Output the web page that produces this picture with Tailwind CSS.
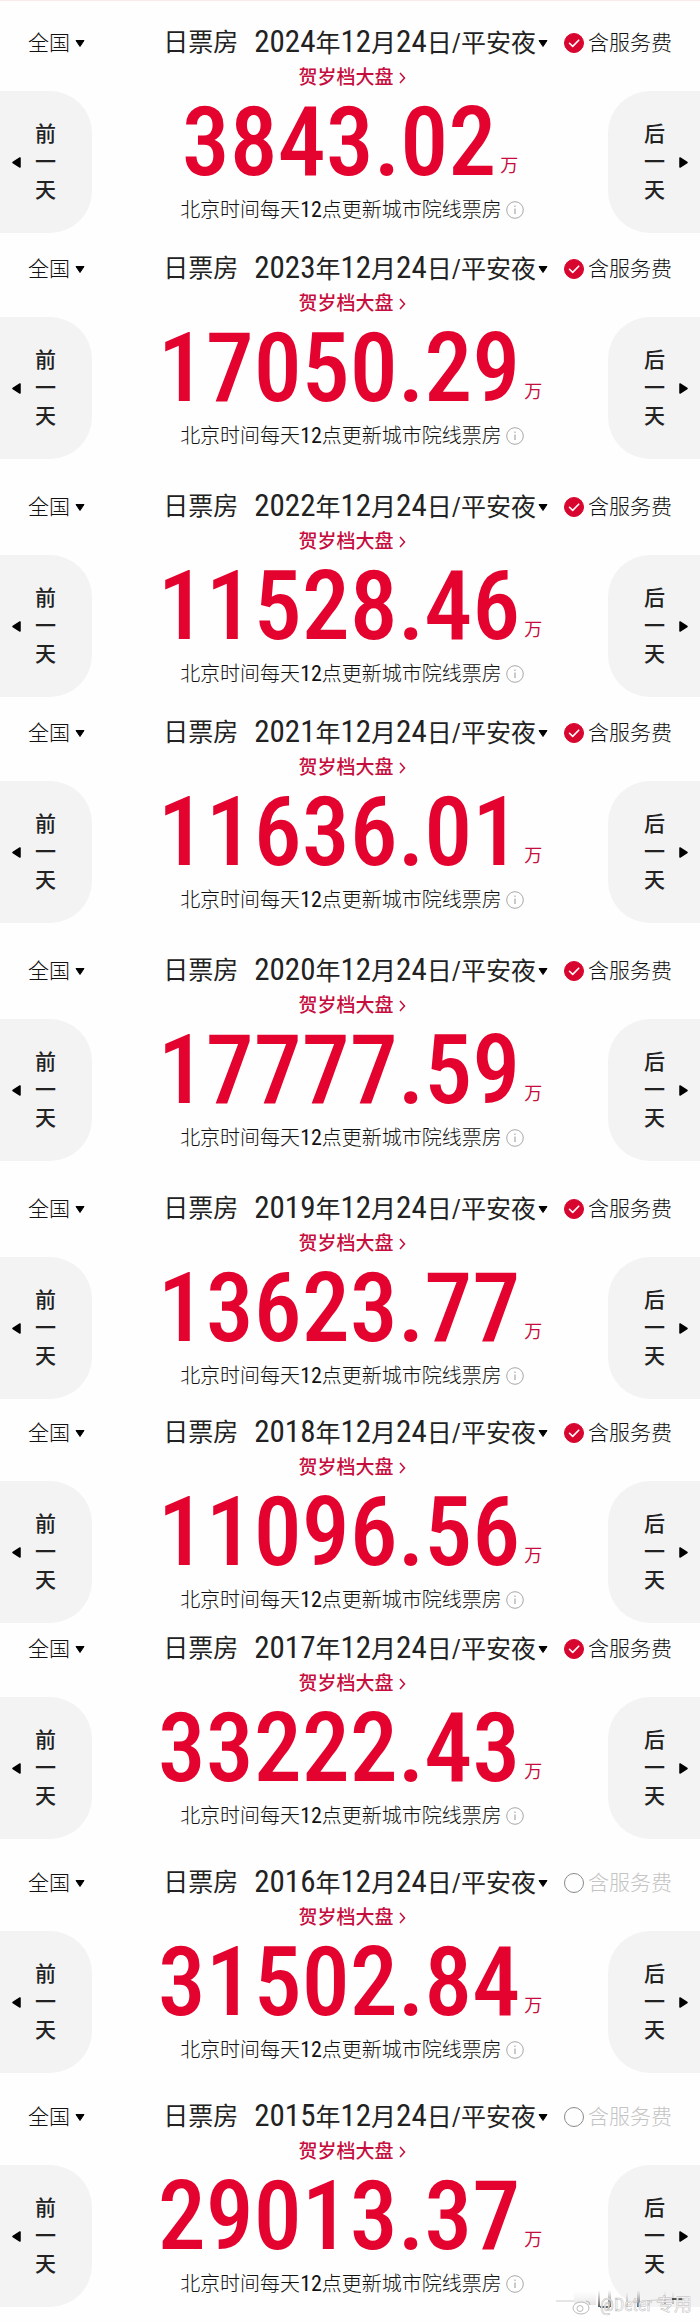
<!DOCTYPE html>

<html lang="zh-CN">
<head>
  <title>平安夜票房</title>
  <meta charset="utf-8">
  <meta name="viewport" content="width=device-width, initial-scale=1">

  <script src="https://cdn.jsdelivr.net/npm/@tailwindcss/browser@4"></script>
</head>

<body class="w-full bg-[#fefefe] border-t border-[#fbeaec] pt-[26px] pb-4 font-['Roboto_Condensed','Roboto','Noto_Sans_CJK_SC',sans-serif] text-[#222]">
  <main id="days" class="relative w-full"></main>

  <template id="day">
    <section class="w-full">
      <header class="flex h-8 items-center gap-4 px-7">
        <label class="mr-auto flex items-center gap-[5px] text-[21px] leading-8">
          <select aria-label="地区" class="appearance-none bg-transparent font-light text-[#111]">
            <option>全国</option>
          </select>
          <svg class="h-[9px] w-[10px]" viewBox="0 0 10 9"><path d="M1 1.500h8L5 7.500z" stroke="#000" stroke-linejoin="round" /></svg>
        </label>

        <h2 class="flex items-center gap-4 text-[25px] leading-8 font-normal whitespace-nowrap">
          <span>日票房</span>
          <button class="date flex items-center gap-[2px]"></button>
        </h2>

        <label class="flex items-center gap-1 text-[21px] leading-8 font-light whitespace-nowrap text-[#c4c4c4] has-[input:checked]:text-[#111]">
          <span class="relative flex">
            <input type="checkbox" class="fee peer h-5 w-5 appearance-none rounded-full border-[1.5px] border-[#8a8a8a] checked:border-[#d8052f] checked:bg-[#d8052f]">
            <svg class="pointer-events-none absolute inset-0 hidden h-5 w-5 peer-checked:block" viewBox="0 0 20 20"><path d="M5.500 10.300l3.200 3.100 6-6.200" fill="none" stroke="#fff" stroke-width="1.600" stroke-linecap="round" stroke-linejoin="round" /></svg>
          </span>
          含服务费
        </label>
      </header>

      <div class="flex items-end justify-between">
        <button class="flex h-[142px] w-[92px] items-center gap-[14px] rounded-r-[42px] bg-[#f3f3f4] pl-3 text-[21px] leading-7 font-medium">
          <svg class="h-[11px] w-[9px]" viewBox="0 0 9 11"><path d="M8 1v9L1 5.500z" stroke="#000" stroke-width="1.500" stroke-linejoin="round" /></svg>
          <span>前<br>一<br>天</span>
        </button>

        <div class="flex flex-1 flex-col items-center whitespace-nowrap">
          <a href="#" class="flex h-[38px] items-center gap-[5px] pl-1 text-[19px] font-medium text-[#c60d3d]">
            贺岁档大盘
            <svg class="h-3 w-[7px]" viewBox="0 0 7 12"><path d="M1 1l4.500 5L1 11" fill="none" stroke="currentColor" stroke-width="1.500" /></svg>
          </a>
          <p class="flex items-end gap-1 text-[#e4032e]">
            <strong class="total text-[96px] leading-[90px] font-medium"></strong>
            <span class="pb-3 text-[18px] leading-none font-normal text-[#c60d3d]">万</span>
          </p>
          <p class="flex h-[46px] items-center gap-1 pl-1 text-[20px] font-light text-[#111]">
            <span>北京时间每天<b class="text-[22px] leading-none font-normal">12</b>点更新城市院线票房</span>
            <button aria-label="说明">
              <svg class="h-[18px] w-[18px]" viewBox="0 0 18 18" fill="none" stroke="#a8a8a8"><circle cx="9" cy="9" r="8.300" /><path d="M9 7.500v5.500M9 4.500v1.500" stroke-width="1.200" /></svg>
            </button>
          </p>
        </div>

        <button class="flex h-[142px] w-[92px] items-center justify-end gap-[14px] rounded-l-[42px] bg-[#f3f3f4] pr-3 text-[21px] leading-7 font-medium">
          <span>后<br>一<br>天</span>
          <svg class="h-[11px] w-[9px]" viewBox="0 0 9 11"><path d="M1 1v9l7-4.500z" stroke="#000" stroke-width="1.500" stroke-linejoin="round" /></svg>
        </button>
      </div>
    </section>
  </template>

  <template id="watermark">
    <div class="absolute right-2 -bottom-2 flex h-7 w-[138px] items-end justify-end gap-2">
      <svg class="absolute inset-0 h-7 w-full" viewBox="0 0 138 28">
        <defs>
          <linearGradient id="fade" x1="0" y1="0" x2="0" y2="1">
            <stop offset="0" stop-color="#777" stop-opacity="0" />
            <stop offset="1" stop-color="#333" stop-opacity=".8" />
          </linearGradient>
        </defs>
        <g fill="url(#fade)">
          <rect x="44" y="3" width="2" height="17" />
          <rect x="54" y="3" width="3" height="17" />
          <rect x="72" y="5" width="2" height="15" opacity=".6" />
          <rect x="83" y="3" width="3" height="17" />
          <rect x="110" y="4" width="2" height="13" opacity=".5" />
          <rect x="118" y="4" width="2" height="13" opacity=".4" />
          <rect x="20" y="4" width="22" height="14" opacity=".15" />
        </g>
        <path d="M46 20h10M118 12h12" stroke="#222" stroke-width="1.500" />
        <path d="M2 14h18M88 14l30-2" stroke="#ccc" />
      </svg>
      <svg class="relative h-4 w-5" viewBox="0 0 20 16" fill="#fff" stroke="#bbb"><ellipse cx="9" cy="9" rx="8" ry="6" /><circle cx="8" cy="9.500" r="3" /><path d="M14 2q4 0 4 4" fill="none" /></svg>
      <span class="relative text-[18px] leading-5 font-normal text-white [-webkit-text-stroke:0.5px_#bbb]">@Deter 专用</span>
    </div>
  </template>

  <script>
    const days = [
      { year: 2024, total: "3843.02", fee: true, gap: "mt-0" },
      { year: 2023, total: "17050.29", fee: true, gap: "mt-5" },
      { year: 2022, total: "11528.46", fee: true, gap: "mt-8" },
      { year: 2021, total: "11636.01", fee: true, gap: "mt-5" },
      { year: 2020, total: "17777.59", fee: true, gap: "mt-8" },
      { year: 2019, total: "13623.77", fee: true, gap: "mt-8" },
      { year: 2018, total: "11096.56", fee: true, gap: "mt-[18px]" },
      { year: 2017, total: "33222.43", fee: true, gap: "mt-[10px]" },
      { year: 2016, total: "31502.84", fee: false, gap: "mt-7" },
      { year: 2015, total: "29013.37", fee: false, gap: "mt-7" },
    ];

    const list = document.querySelector("#days");
    const template = document.querySelector("#day");

    // digits are set larger and heavier than the characters around them
    const digits = (value) => `<b class="text-[31px] leading-none font-normal">${value}</b>`;

    days.forEach((day) => {
      const node = template.content.cloneNode(true);

      node.querySelector("section").classList.add(day.gap);
      node.querySelector(".date").innerHTML = `
        <span>${digits(day.year)}年${digits(12)}月${digits(24)}日/平安夜</span>
        <svg class="h-[9px] w-[10px]" viewBox="0 0 10 9"><path d="M1 1.500h8L5 7.500z" stroke="#000" stroke-linejoin="round" /></svg>`;
      node.querySelector(".fee").checked = day.fee;
      node.querySelector(".total").innerText = day.total;

      list.appendChild(node);
    });

    list.appendChild(document.querySelector("#watermark").content.cloneNode(true));
  </script>
</body>
</html>
